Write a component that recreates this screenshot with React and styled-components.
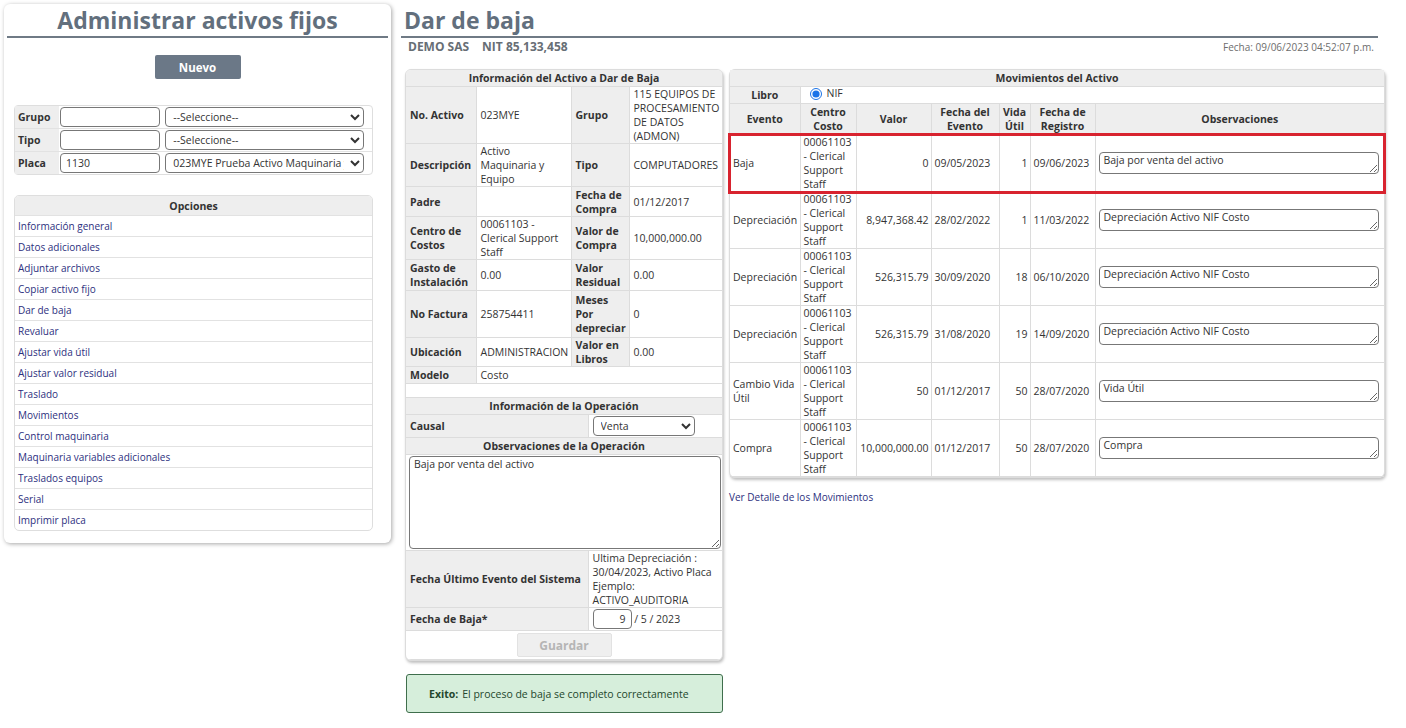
import React from "react";
import styled, { createGlobalStyle } from "styled-components";

const GlobalStyle = createGlobalStyle`
  body {
    margin: 0;
    background: #fff;
    font-family: "Open Sans", "Noto Sans", sans-serif;
    font-size: 10px;
    color: #333;
  }
`;

const Page = styled.div`
  display: flex;
  align-items: flex-start;
  padding: 4px 0 0 4px;
  gap: 10px;
`;

const SidePanel = styled.div`
  width: 381px;
  padding: 0 3px 12px;
  background: #fff;
  border-radius: 6px;
  box-shadow: 1px 1px 4px rgba(0, 0, 0, 0.35);
`;

const Title = styled.h1`
  margin: 0;
  font-size: 23px;
  font-weight: 700;
  color: #626f7d;
  text-align: ${(p) => p.$align || "left"};
  line-height: 32px;
  border-bottom: 2px solid #6f7a85;
  padding-left: ${(p) => (p.$align === "center" ? "0" : "3px")};
`;

const NewButton = styled.button`
  display: block;
  margin: 17px auto 26px;
  width: 86px;
  height: 24px;
  border: none;
  border-radius: 2px;
  background: #6b7887;
  color: #fff;
  font-family: inherit;
  font-size: 11.5px;
  font-weight: 700;
`;

const FilterTable = styled.table`
  margin: 0 7px;
  width: 359px;
  border-collapse: separate;
  border-spacing: 0;
  border: 1px solid #dedede;
  border-radius: 4px;

  td {
    padding: 1px 1px;
    border-top: 1px solid #e2e2e2;
  }
  tr:first-child td {
    border-top: none;
  }
`;

const FilterLabel = styled.td`
  width: 40px;
  background: #eee;
  font-weight: 700;
  font-size: 10.5px;
  padding-left: 3px !important;
`;

const TextInput = styled.input`
  box-sizing: border-box;
  width: ${(p) => p.$w || 100}px;
  height: 20px;
  border: 1px solid #777;
  border-radius: 4px;
  padding: 0 5px;
  font-family: inherit;
  font-size: 10.5px;
  color: #333;
  text-align: ${(p) => p.$align || "left"};
`;

const Select = styled.select`
  box-sizing: border-box;
  width: ${(p) => p.$w || 199}px;
  height: 20px;
  border: 1px solid #777;
  border-radius: 4px;
  padding: 0 3px;
  font-family: inherit;
  font-size: 10.5px;
  color: #333;
  background: #fff;
`;

const OptionsTable = styled.table`
  margin: 20px 7px 0;
  width: 359px;
  border-collapse: separate;
  border-spacing: 0;
  border: 1px solid #dedede;
  border-radius: 5px;
  overflow: hidden;

  th {
    background: #eee;
    font-size: 10.5px;
    font-weight: 700;
    height: 19px;
    padding: 0;
  }
  td {
    height: 20px;
    padding: 0 3px;
    border-top: 1px solid #e2e2e2;
  }
`;

const LinkText = styled.a`
  color: #2d2f7e;
  text-decoration: none;
  font-size: 10px;
`;

const Main = styled.div`
  width: 977px;
`;

const SubHeader = styled.div`
  display: flex;
  justify-content: space-between;
  align-items: center;
  padding: 0 4px 0 7px;
  height: 17px;
`;

const Company = styled.div`
  display: flex;
  gap: 13px;
  font-size: 12px;
  font-weight: 700;
  color: #676e75;
`;

const DateStamp = styled.span`
  font-size: 10px;
  color: #6d6d6d;
`;

const Columns = styled.div`
  display: flex;
  align-items: flex-start;
  gap: 6px;
  margin-top: 14px;
  padding-left: 4px;
`;

const Column = styled.div`
  display: flex;
  flex-direction: column;
  gap: ${(p) => p.$gap || 0}px;
`;

const Card = styled.div`
  box-sizing: border-box;
  width: ${(p) => p.$w}px;
  background: #fff;
  border: 1px solid #dcdcdc;
  border-radius: 6px;
  box-shadow: 1px 2px 3px rgba(0, 0, 0, 0.25);
  overflow: ${(p) => (p.$visible ? "visible" : "hidden")};
`;

const DataTable = styled.table`
  width: 100%;
  border-collapse: collapse;
  table-layout: fixed;
  line-height: 14px;

  td,
  th {
    border: 1px solid #dcdcdc;
    padding: ${(p) => p.$pad || "0 4px"};
    vertical-align: middle;
    text-align: left;
    font-size: 10.5px;
  }
  tr:first-child > * {
    border-top: none;
  }
  tr > *:first-child {
    border-left: none;
  }
  tr > *:last-child {
    border-right: none;
  }
`;

const HeadCell = styled.th`
  background: #eee;
  font-weight: 700;
  text-align: center !important;
  padding: 1px 2px !important;
`;

const Label = styled.td`
  background: #eee;
  font-weight: 700;
  height: ${(p) => (p.$h ? `${p.$h}px` : "auto")};
`;

const Cell = styled.td`
  text-align: ${(p) => p.$align || "left"} !important;
  white-space: ${(p) => (p.$nowrap ? "nowrap" : "normal")};
`;

const ObsArea = styled.textarea`
  box-sizing: border-box;
  display: block;
  width: 100%;
  height: ${(p) => p.$h || 22}px;
  border: 1px solid #777;
  border-radius: 4px;
  padding: 0 4px;
  font-family: inherit;
  font-size: 10.5px;
  line-height: 14px;
  color: #333;
  resize: vertical;
`;

const SaveButton = styled.button`
  width: 95px;
  height: 24px;
  border: 1px solid #e2e2e2;
  border-radius: 2px;
  background: #efefef;
  color: #b5b5b5;
  font-family: inherit;
  font-size: 12px;
  font-weight: 700;
`;

const SuccessBox = styled.div`
  box-sizing: border-box;
  width: 317px;
  height: 39px;
  display: flex;
  align-items: center;
  padding-left: 22px;
  margin-left: 1px;
  background: #d6eedb;
  border: 1px solid #3f6e4c;
  border-radius: 3px;
  color: #23472d;
  font-size: 10.5px;

  b {
    margin-right: 4px;
  }
`;

const HighlightRow = styled.tr`
  outline: 3px solid #d8232f;
  outline-offset: -1px;
`;

const RadioLabel = styled.label`
  display: inline-flex;
  align-items: center;
  gap: 5px;
  margin-left: 6px;
  line-height: 13px;
`;

const Radio = styled.input`
  margin: 0;
  width: 12px;
  height: 12px;
  accent-color: #1a73e8;
`;

const DetailLink = styled(LinkText)`
  margin-top: 12px;
  display: block;
`;

const options = [
  "Información general",
  "Datos adicionales",
  "Adjuntar archivos",
  "Copiar activo fijo",
  "Dar de baja",
  "Revaluar",
  "Ajustar vida útil",
  "Ajustar valor residual",
  "Traslado",
  "Movimientos",
  "Control maquinaria",
  "Maquinaria variables adicionales",
  "Traslados equipos",
  "Serial",
  "Imprimir placa",
];

const centro = "00061103 - Clerical Support Staff";

const movimientos = [
  { evento: "Baja", valor: "0", fecha: "09/05/2023", vida: "1", registro: "09/06/2023", obs: "Baja por venta del activo", hl: true },
  { evento: "Depreciación", valor: "8,947,368.42", fecha: "28/02/2022", vida: "1", registro: "11/03/2022", obs: "Depreciación Activo NIF Costo" },
  { evento: "Depreciación", valor: "526,315.79", fecha: "30/09/2020", vida: "18", registro: "06/10/2020", obs: "Depreciación Activo NIF Costo" },
  { evento: "Depreciación", valor: "526,315.79", fecha: "31/08/2020", vida: "19", registro: "14/09/2020", obs: "Depreciación Activo NIF Costo" },
  { evento: "Cambio Vida Útil", valor: "50", fecha: "01/12/2017", vida: "50", registro: "28/07/2020", obs: "Vida Útil" },
  { evento: "Compra", valor: "10,000,000.00", fecha: "01/12/2017", vida: "50", registro: "28/07/2020", obs: "Compra" },
];

const MovRow = ({ m }) => {
  const Row = m.hl ? HighlightRow : "tr";
  return (
    <Row>
      <Cell>{m.evento}</Cell>
      <Cell>{centro}</Cell>
      <Cell $align="right" $nowrap>{m.valor}</Cell>
      <Cell $nowrap>{m.fecha}</Cell>
      <Cell $align="right">{m.vida}</Cell>
      <Cell $nowrap>{m.registro}</Cell>
      <Cell style={{ height: 56, paddingRight: 5 }}>
        <ObsArea defaultValue={m.obs} />
      </Cell>
    </Row>
  );
};

const App = () => {
  return (
    <>
      <GlobalStyle />
      <Page>
        <SidePanel>
          <Title $align="center">Administrar activos fijos</Title>
          <NewButton>Nuevo</NewButton>
          <FilterTable>
            <tbody>
              <tr>
                <FilterLabel>Grupo</FilterLabel>
                <td><TextInput /></td>
                <td><Select><option>--Seleccione--</option></Select></td>
              </tr>
              <tr>
                <FilterLabel>Tipo</FilterLabel>
                <td><TextInput /></td>
                <td><Select><option>--Seleccione--</option></Select></td>
              </tr>
              <tr>
                <FilterLabel>Placa</FilterLabel>
                <td><TextInput defaultValue="1130" /></td>
                <td>
                  <Select><option>023MYE Prueba Activo Maquinaria y Equipo</option></Select>
                </td>
              </tr>
            </tbody>
          </FilterTable>
          <OptionsTable>
            <thead>
              <tr><th>Opciones</th></tr>
            </thead>
            <tbody>
              {options.map((o) => (
                <tr key={o}>
                  <td><LinkText href="#">{o}</LinkText></td>
                </tr>
              ))}
            </tbody>
          </OptionsTable>
        </SidePanel>

        <Main>
          <Title>Dar de baja</Title>
          <SubHeader>
            <Company>
              <span>DEMO SAS</span>
              <span>NIT 85,133,458</span>
            </Company>
            <DateStamp>Fecha: 09/06/2023 04:52:07 p.m.</DateStamp>
          </SubHeader>
          <Columns>
            <Column $gap={13}>
              <Card $w={318}>
                <DataTable>
                  <colgroup>
                    <col style={{ width: 70 }} />
                    <col style={{ width: 95 }} />
                    <col style={{ width: 58 }} />
                    <col style={{ width: 93 }} />
                  </colgroup>
                  <tbody>
                    <tr><HeadCell colSpan={4}>Información del Activo a Dar de Baja</HeadCell></tr>
                    <tr>
                      <Label>No. Activo</Label>
                      <Cell>023MYE</Cell>
                      <Label>Grupo</Label>
                      <Cell>115 EQUIPOS DE PROCESAMIENTO DE DATOS (ADMON)</Cell>
                    </tr>
                    <tr>
                      <Label>Descripción</Label>
                      <Cell>Activo Maquinaria y Equipo</Cell>
                      <Label>Tipo</Label>
                      <Cell>COMPUTADORES</Cell>
                    </tr>
                    <tr>
                      <Label $h={29}>Padre</Label>
                      <Cell />
                      <Label>Fecha de Compra</Label>
                      <Cell>01/12/2017</Cell>
                    </tr>
                    <tr>
                      <Label>Centro de Costos</Label>
                      <Cell>00061103 - Clerical Support Staff</Cell>
                      <Label>Valor de Compra</Label>
                      <Cell>10,000,000.00</Cell>
                    </tr>
                    <tr>
                      <Label $h={30}>Gasto de Instalación</Label>
                      <Cell>0.00</Cell>
                      <Label>Valor Residual</Label>
                      <Cell>0.00</Cell>
                    </tr>
                    <tr>
                      <Label $h={46}>No Factura</Label>
                      <Cell>258754411</Cell>
                      <Label>Meses Por depreciar</Label>
                      <Cell>0</Cell>
                    </tr>
                    <tr>
                      <Label>Ubicación</Label>
                      <Cell $nowrap>ADMINISTRACION</Cell>
                      <Label>Valor en Libros</Label>
                      <Cell>0.00</Cell>
                    </tr>
                    <tr>
                      <Label $h={16}>Modelo</Label>
                      <Cell colSpan={3}>Costo</Cell>
                    </tr>
                    <tr>
                      <Cell colSpan={4} style={{ height: 13 }} />
                    </tr>
                  </tbody>
                </DataTable>
                <DataTable>
                  <colgroup>
                    <col style={{ width: 182 }} />
                    <col style={{ width: 134 }} />
                  </colgroup>
                  <tbody>
                    <tr><HeadCell colSpan={2}>Información de la Operación</HeadCell></tr>
                    <tr>
                      <Label $h={22}>Causal</Label>
                      <Cell>
                        <Select $w={102}><option>Venta</option></Select>
                      </Cell>
                    </tr>
                    <tr><HeadCell colSpan={2}>Observaciones de la Operación</HeadCell></tr>
                    <tr>
                      <Cell colSpan={2} style={{ padding: "1px 1px 1px 3px" }}>
                        <ObsArea $h={93} defaultValue="Baja por venta del activo" />
                      </Cell>
                    </tr>
                    <tr>
                      <Label>Fecha Último Evento del Sistema</Label>
                      <Cell>Ultima Depreciación : 30/04/2023, Activo Placa Ejemplo: ACTIVO_AUDITORIA</Cell>
                    </tr>
                    <tr>
                      <Label $h={22}>Fecha de Baja*</Label>
                      <Cell $nowrap>
                        <TextInput $w={39} $align="right" defaultValue="9" /> / 5 / 2023
                      </Cell>
                    </tr>
                    <tr>
                      <Cell colSpan={2} $align="center" style={{ height: 28 }}>
                        <SaveButton disabled>Guardar</SaveButton>
                      </Cell>
                    </tr>
                  </tbody>
                </DataTable>
              </Card>
              <SuccessBox>
                <b>Exito:</b> El proceso de baja se completo correctamente
              </SuccessBox>
            </Column>

            <Column>
              <Card $w={656} $visible>
                <DataTable $pad="0 2px 0 3px">
                  <colgroup>
                    <col style={{ width: 70 }} />
                    <col style={{ width: 56 }} />
                    <col style={{ width: 75 }} />
                    <col style={{ width: 68 }} />
                    <col style={{ width: 31 }} />
                    <col style={{ width: 65 }} />
                    <col style={{ width: 289 }} />
                  </colgroup>
                  <tbody>
                    <tr><HeadCell colSpan={7}>Movimientos del Activo</HeadCell></tr>
                    <tr>
                      <HeadCell>Libro</HeadCell>
                      <Cell colSpan={6}>
                        <RadioLabel>
                          <Radio type="radio" defaultChecked name="libro" /> NIF
                        </RadioLabel>
                      </Cell>
                    </tr>
                    <tr>
                      <HeadCell>Evento</HeadCell>
                      <HeadCell>Centro Costo</HeadCell>
                      <HeadCell>Valor</HeadCell>
                      <HeadCell>Fecha del Evento</HeadCell>
                      <HeadCell>Vida Útil</HeadCell>
                      <HeadCell>Fecha de Registro</HeadCell>
                      <HeadCell>Observaciones</HeadCell>
                    </tr>
                    {movimientos.map((m, i) => (
                      <MovRow key={i} m={m} />
                    ))}
                  </tbody>
                </DataTable>
              </Card>
              <DetailLink href="#">Ver Detalle de los Movimientos</DetailLink>
            </Column>
          </Columns>
        </Main>
      </Page>
    </>
  );
};

export default App;
